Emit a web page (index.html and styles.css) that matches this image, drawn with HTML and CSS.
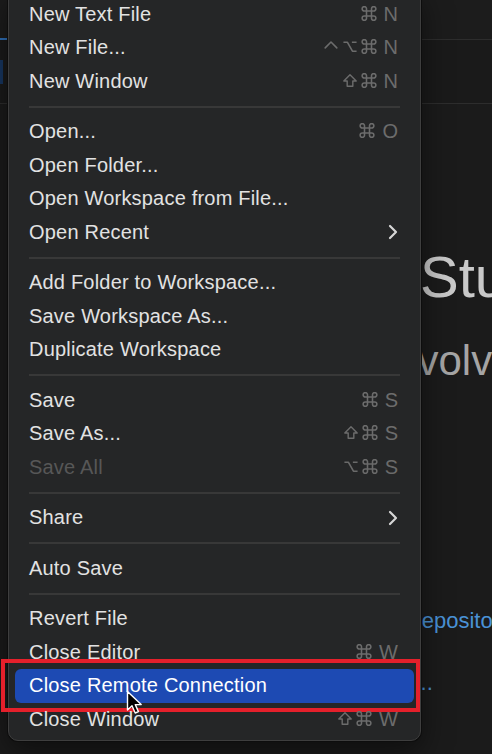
FILE: index.html
```html
<!DOCTYPE html>
<html>
<head>
<meta charset="utf-8">
<link rel="stylesheet" href="styles.css">
</head>
<body>
<svg class="defs" width="0" height="0" aria-hidden="true">
  <defs>
    <symbol id="cmd" viewBox="2 2 12 12">
      <path d="M6 6H10V10H6Z M6 6V4.25A1.75 1.75 0 1 0 4.25 6H6 M10 6V4.25A1.75 1.75 0 1 1 11.75 6H10 M6 10V11.75A1.75 1.75 0 1 1 4.25 10H6 M10 10V11.75A1.75 1.75 0 1 0 11.75 10H10" fill="none" stroke="currentColor" stroke-width="1.25" stroke-linejoin="round"/>
    </symbol>
    <symbol id="opt" viewBox="0 0 16 16">
      <path d="M1 3.5H5.3L10.6 13H15 M10 3.5H15" fill="none" stroke="currentColor" stroke-width="1.7" stroke-linejoin="round"/>
    </symbol>
    <symbol id="shift" viewBox="0 0 16 16">
      <path d="M8 1.8L14.6 8.6H11V14.2H5V8.6H1.4Z" fill="none" stroke="currentColor" stroke-width="1.5" stroke-linejoin="round"/>
    </symbol>
    <symbol id="ctrl" viewBox="0 0 16 16">
      <path d="M1.8 9.5L8 3.2L14.2 9.5" fill="none" stroke="currentColor" stroke-width="1.7" stroke-linejoin="round" stroke-linecap="round"/>
    </symbol>
    <symbol id="chev" viewBox="0 0 10 16">
      <polyline points="2,2 8,8 2,14" fill="none" stroke="currentColor" stroke-width="2.2" stroke-linecap="round" stroke-linejoin="round"/>
    </symbol>
  </defs>
</svg>

<div class="editor">
  <div class="tabbar"><div class="tab-active"></div></div>
  <div class="toolbar"><div class="tb-mark"></div></div>
  <div class="welcome">
    <div class="title">Visual Studio Code</div>
    <div class="subtitle">Editing evolved</div>
    <div class="links">
      <div class="link">New File...</div>
      <div class="link">Clone Git Repository...</div>
      <div class="link">Open...</div>
      <div class="link">Connect to...</div>
    </div>
  </div>
</div>

<div class="menu">
  <div class="item"><span>New Text File</span><span class="keys"><svg class="k"><use href="#cmd"/></svg><span class="kl">N</span></span></div>
  <div class="item"><span>New File...</span><span class="keys"><svg class="k"><use href="#ctrl"/></svg><svg class="k"><use href="#opt"/></svg><svg class="k"><use href="#cmd"/></svg><span class="kl">N</span></span></div>
  <div class="item"><span>New Window</span><span class="keys"><svg class="k"><use href="#shift"/></svg><svg class="k"><use href="#cmd"/></svg><span class="kl">N</span></span></div>
  <div class="sep"></div>
  <div class="item"><span>Open...</span><span class="keys"><svg class="k"><use href="#cmd"/></svg><span class="kl">O</span></span></div>
  <div class="item"><span>Open Folder...</span></div>
  <div class="item"><span>Open Workspace from File...</span></div>
  <div class="item"><span>Open Recent</span><svg class="chev"><use href="#chev"/></svg></div>
  <div class="sep"></div>
  <div class="item"><span>Add Folder to Workspace...</span></div>
  <div class="item"><span>Save Workspace As...</span></div>
  <div class="item"><span>Duplicate Workspace</span></div>
  <div class="sep"></div>
  <div class="item"><span>Save</span><span class="keys"><svg class="k"><use href="#cmd"/></svg><span class="kl">S</span></span></div>
  <div class="item"><span>Save As...</span><span class="keys"><svg class="k"><use href="#shift"/></svg><svg class="k"><use href="#cmd"/></svg><span class="kl">S</span></span></div>
  <div class="item disabled"><span>Save All</span><span class="keys"><svg class="k"><use href="#opt"/></svg><svg class="k"><use href="#cmd"/></svg><span class="kl">S</span></span></div>
  <div class="sep"></div>
  <div class="item"><span>Share</span><svg class="chev"><use href="#chev"/></svg></div>
  <div class="sep"></div>
  <div class="item"><span>Auto Save</span></div>
  <div class="sep"></div>
  <div class="item"><span>Revert File</span></div>
  <div class="item"><span>Close Editor</span><span class="keys"><svg class="k"><use href="#cmd"/></svg><span class="kl">W</span></span></div>
  <div class="item active"><span>Close Remote Connection</span></div>
  <div class="item"><span>Close Window</span><span class="keys"><svg class="k"><use href="#shift"/></svg><svg class="k"><use href="#cmd"/></svg><span class="kl">W</span></span></div>
</div>

<svg class="cursor" width="18" height="26" viewBox="0 0 18 26">
  <path d="M1.5 1.5 L1.5 20 L6 15.8 L9.2 23 L12.4 21.6 L9.3 14.6 L15.2 14.6 Z" fill="#000" stroke="#fff" stroke-width="1.4" stroke-linejoin="round"/>
</svg>
</body>
</html>
```

FILE: styles.css
```css
html, body {
  margin: 0;
  padding: 0;
}

body {
  width: 492px;
  height: 754px;
  overflow: hidden;
  position: relative;
  background: #1b1b1b;
  font-family: "Liberation Sans", Arial, sans-serif;
}

.defs {
  position: absolute;
  width: 0;
  height: 0;
}

/* background editor */
.editor {
  display: flex;
  flex-direction: column;
  height: 100%;
}

.tabbar {
  height: 39px;
  border-bottom: 1px solid #2d2d2d;
  display: flex;
  align-items: flex-end;
  background: #1c1c1c;
}

.tab-active {
  width: 7px;
  height: 2px;
  margin-bottom: -1px;
  background: #2f6fb7;
}

.toolbar {
  height: 63px;
  border-bottom: 1px solid #2d2d2d;
  display: flex;
  align-items: flex-start;
  background: #1a1a1a;
}

.tb-mark {
  width: 3px;
  height: 24px;
  margin-top: 20px;
  background: #173660;
}

.welcome {
  display: flex;
  flex-direction: column;
  padding-top: 144px;
  white-space: nowrap;
}

.title {
  font-size: 58px;
  line-height: 58px;
  color: #c9c9c9;
  margin-left: 247px;
}

.subtitle {
  font-size: 42px;
  line-height: 42px;
  color: #a5a5a5;
  margin-left: 254px;
  margin-top: 33.5px;
}

.links {
  display: flex;
  flex-direction: column;
  margin-left: 308px;
  margin-top: 192.7px;
}

.link {
  font-size: 22px;
  line-height: 31px;
  color: #4a92d6;
}

/* menu overlay */
.menu {
  position: absolute;
  left: 8px;
  top: -10px;
  width: 413px;
  box-sizing: border-box;
  padding: 6.5px 0 4px;
  background: #252627;
  border: 1px solid #3e3e3e;
  border-radius: 10px;
  box-shadow: 0 0 0 1px #0d0d0d, 0 10px 30px rgba(0, 0, 0, 0.5);
  display: flex;
  flex-direction: column;
}

.item {
  position: relative;
  height: 33.5px;
  margin: 0 6px;
  padding: 0 16px 0 14px;
  display: flex;
  align-items: center;
  justify-content: space-between;
  border-radius: 6px;
  color: #e2e2e2;
  font-size: 20px;
  letter-spacing: 0.2px;
  white-space: nowrap;
}

.item.disabled {
  color: #575757;
}

.item.disabled .keys {
  color: #6a6a6a;
}

.item.active {
  background: #1d4ab3;
  color: #ffffff;
}

.item.active::after {
  content: "";
  position: absolute;
  left: -14px;
  right: -5.5px;
  top: -10.5px;
  bottom: -9px;
  border: 4px solid #e5202b;
  pointer-events: none;
}

.sep {
  height: 17px;
  margin: 0 20px;
  display: flex;
  align-items: center;
}

.sep::before {
  content: "";
  flex: 1;
  height: 2px;
  background: #383838;
}

.keys {
  display: flex;
  align-items: center;
  gap: 3px;
  color: #6c6c6c;
  letter-spacing: 0;
}

.k {
  display: block;
  width: 16px;
  height: 15px;
  margin-top: -2px;
}

.kl {
  margin-left: 4px;
  font-size: 20px;
}

.chev {
  display: block;
  width: 10px;
  height: 16px;
  color: #d6d6d6;
}

.cursor {
  position: absolute;
  left: 126px;
  top: 690px;
}
```
